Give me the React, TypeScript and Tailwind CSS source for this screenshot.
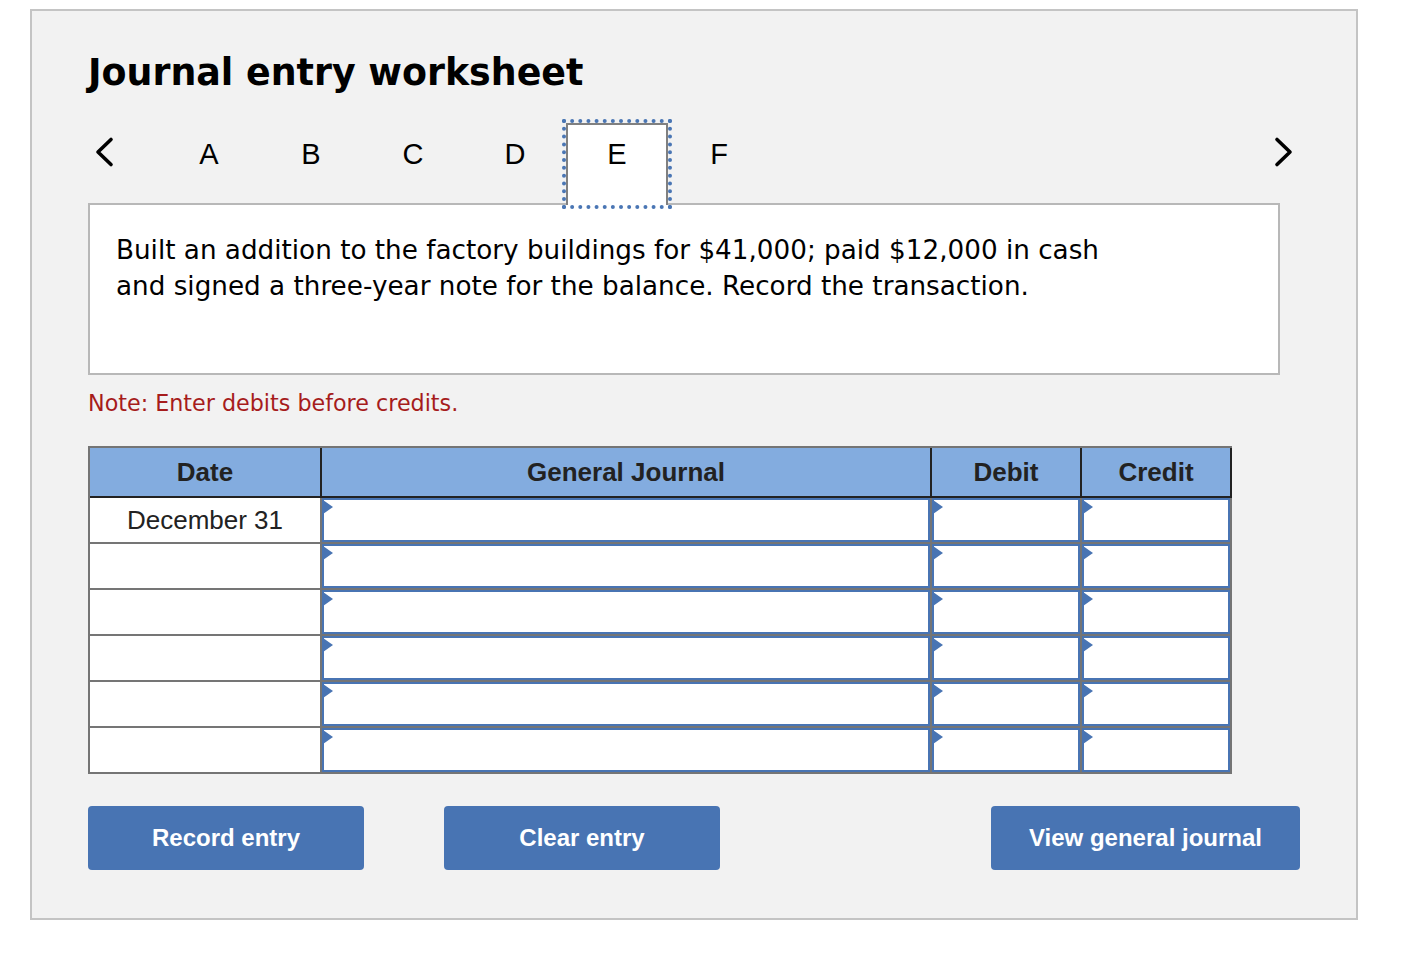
import React from "react";

const tabs = ["A", "B", "C", "D", "E", "F"];
const rows = ["December 31", "", "", "", "", ""];

function Chevron({ dir }: { dir: "left" | "right" }) {
  return (
    <svg width="20" height="32" viewBox="0 0 20 32" fill="none" stroke="#000" strokeWidth="3.6" strokeLinecap="round" strokeLinejoin="round">
      {dir === "left" ? <path d="M17 3.5 L4 16 L17 28.5" /> : <path d="M3 3.5 L16 16 L3 28.5" />}
    </svg>
  );
}

function EntryCell({ width }: { width: string }) {
  return (
    <div className={`relative h-[46px] border-r-2 border-b-2 border-[#757575] ${width}`}>
      <input className="block w-full h-full border-2 border-[#4874b3] bg-white outline-none" />
      <span className="absolute left-px top-[2px] w-0 h-0 border-y-[7px] border-y-transparent border-l-[10px] border-l-[#4874b3]" />
    </div>
  );
}

function ActionButton({ label, width }: { label: string; width: string }) {
  return (
    <button className={`h-16 rounded bg-[#4874b3] text-white font-bold text-[24px] ${width}`}>{label}</button>
  );
}

export default function App() {
  return (
    <div className="pt-[9px] pl-[30px] bg-white h-[970px] font-['Liberation_Sans',sans-serif]">
      <div className="w-[1328px] h-[911px] border-2 border-[#c4c4c4] bg-[#f2f2f2] px-[56px] pt-[39px]">
        <h1 className="font-['DejaVu_Sans',sans-serif] font-bold text-[36.4px] leading-[46px] text-black">
          Journal entry worksheet
        </h1>

        <div className="flex items-start mt-[27px] h-[82px] -mb-[2px] w-[1206px] relative z-10">
          <div className="w-[70px] pt-[13px] pl-[6px]">
            <Chevron dir="left" />
          </div>
          {tabs.map((t) => (
            <div
              key={t}
              className={
                t === "E"
                  ? "w-[102px] h-[82px] text-center text-[29px] leading-[58px] bg-white border-2 border-b-0 border-[#808080] outline-4 outline-dotted outline-[#4a76b4]"
                  : "w-[102px] h-[82px] text-center text-[29px] leading-[62px] text-black"
              }
            >
              {t}
            </div>
          ))}
          <div className="ml-auto pt-[13px]">
            <Chevron dir="right" />
          </div>
        </div>

        <div className="w-[1192px] h-[172px] border-2 border-[#b8b8b8] bg-white px-[26px] pt-[27px] font-['DejaVu_Sans',sans-serif] text-[26.24px] leading-[36px] text-black">
          Built an addition to the factory buildings for $41,000; paid $12,000 in cash
          <br />
          and signed a three-year note for the balance. Record the transaction.
        </div>

        <p className="mt-[13px] font-['DejaVu_Sans',sans-serif] text-[22.24px] leading-[30px] text-[#a61c1c]">
          Note: Enter debits before credits.
        </p>

        <div className="mt-[28px] w-[1144px] border-t-2 border-l-2 border-[#757575] text-[#222]">
          <div className="flex h-[50px] bg-[#83acdf] border-b-2 border-[#222] font-bold text-[26px] leading-[48px] text-center">
            <div className="w-[232px] border-r-2 border-[#222]">Date</div>
            <div className="w-[610px] border-r-2 border-[#222]">General Journal</div>
            <div className="w-[150px] border-r-2 border-[#222]">Debit</div>
            <div className="w-[150px] border-r-2 border-[#222]">Credit</div>
          </div>
          {rows.map((date, i) => (
            <div key={i} className="flex">
              <div className="w-[232px] h-[46px] border-r-2 border-b-2 border-[#757575] bg-white text-center text-[26px] leading-[44px]">
                {date}
              </div>
              <EntryCell width="w-[610px]" />
              <EntryCell width="w-[150px]" />
              <EntryCell width="w-[150px]" />
            </div>
          ))}
        </div>

        <div className="flex mt-[32px] w-[1212px]">
          <ActionButton label="Record entry" width="w-[276px]" />
          <ActionButton label="Clear entry" width="w-[276px] ml-[80px]" />
          <ActionButton label="View general journal" width="w-[309px] ml-auto" />
        </div>
      </div>
    </div>
  );
}
